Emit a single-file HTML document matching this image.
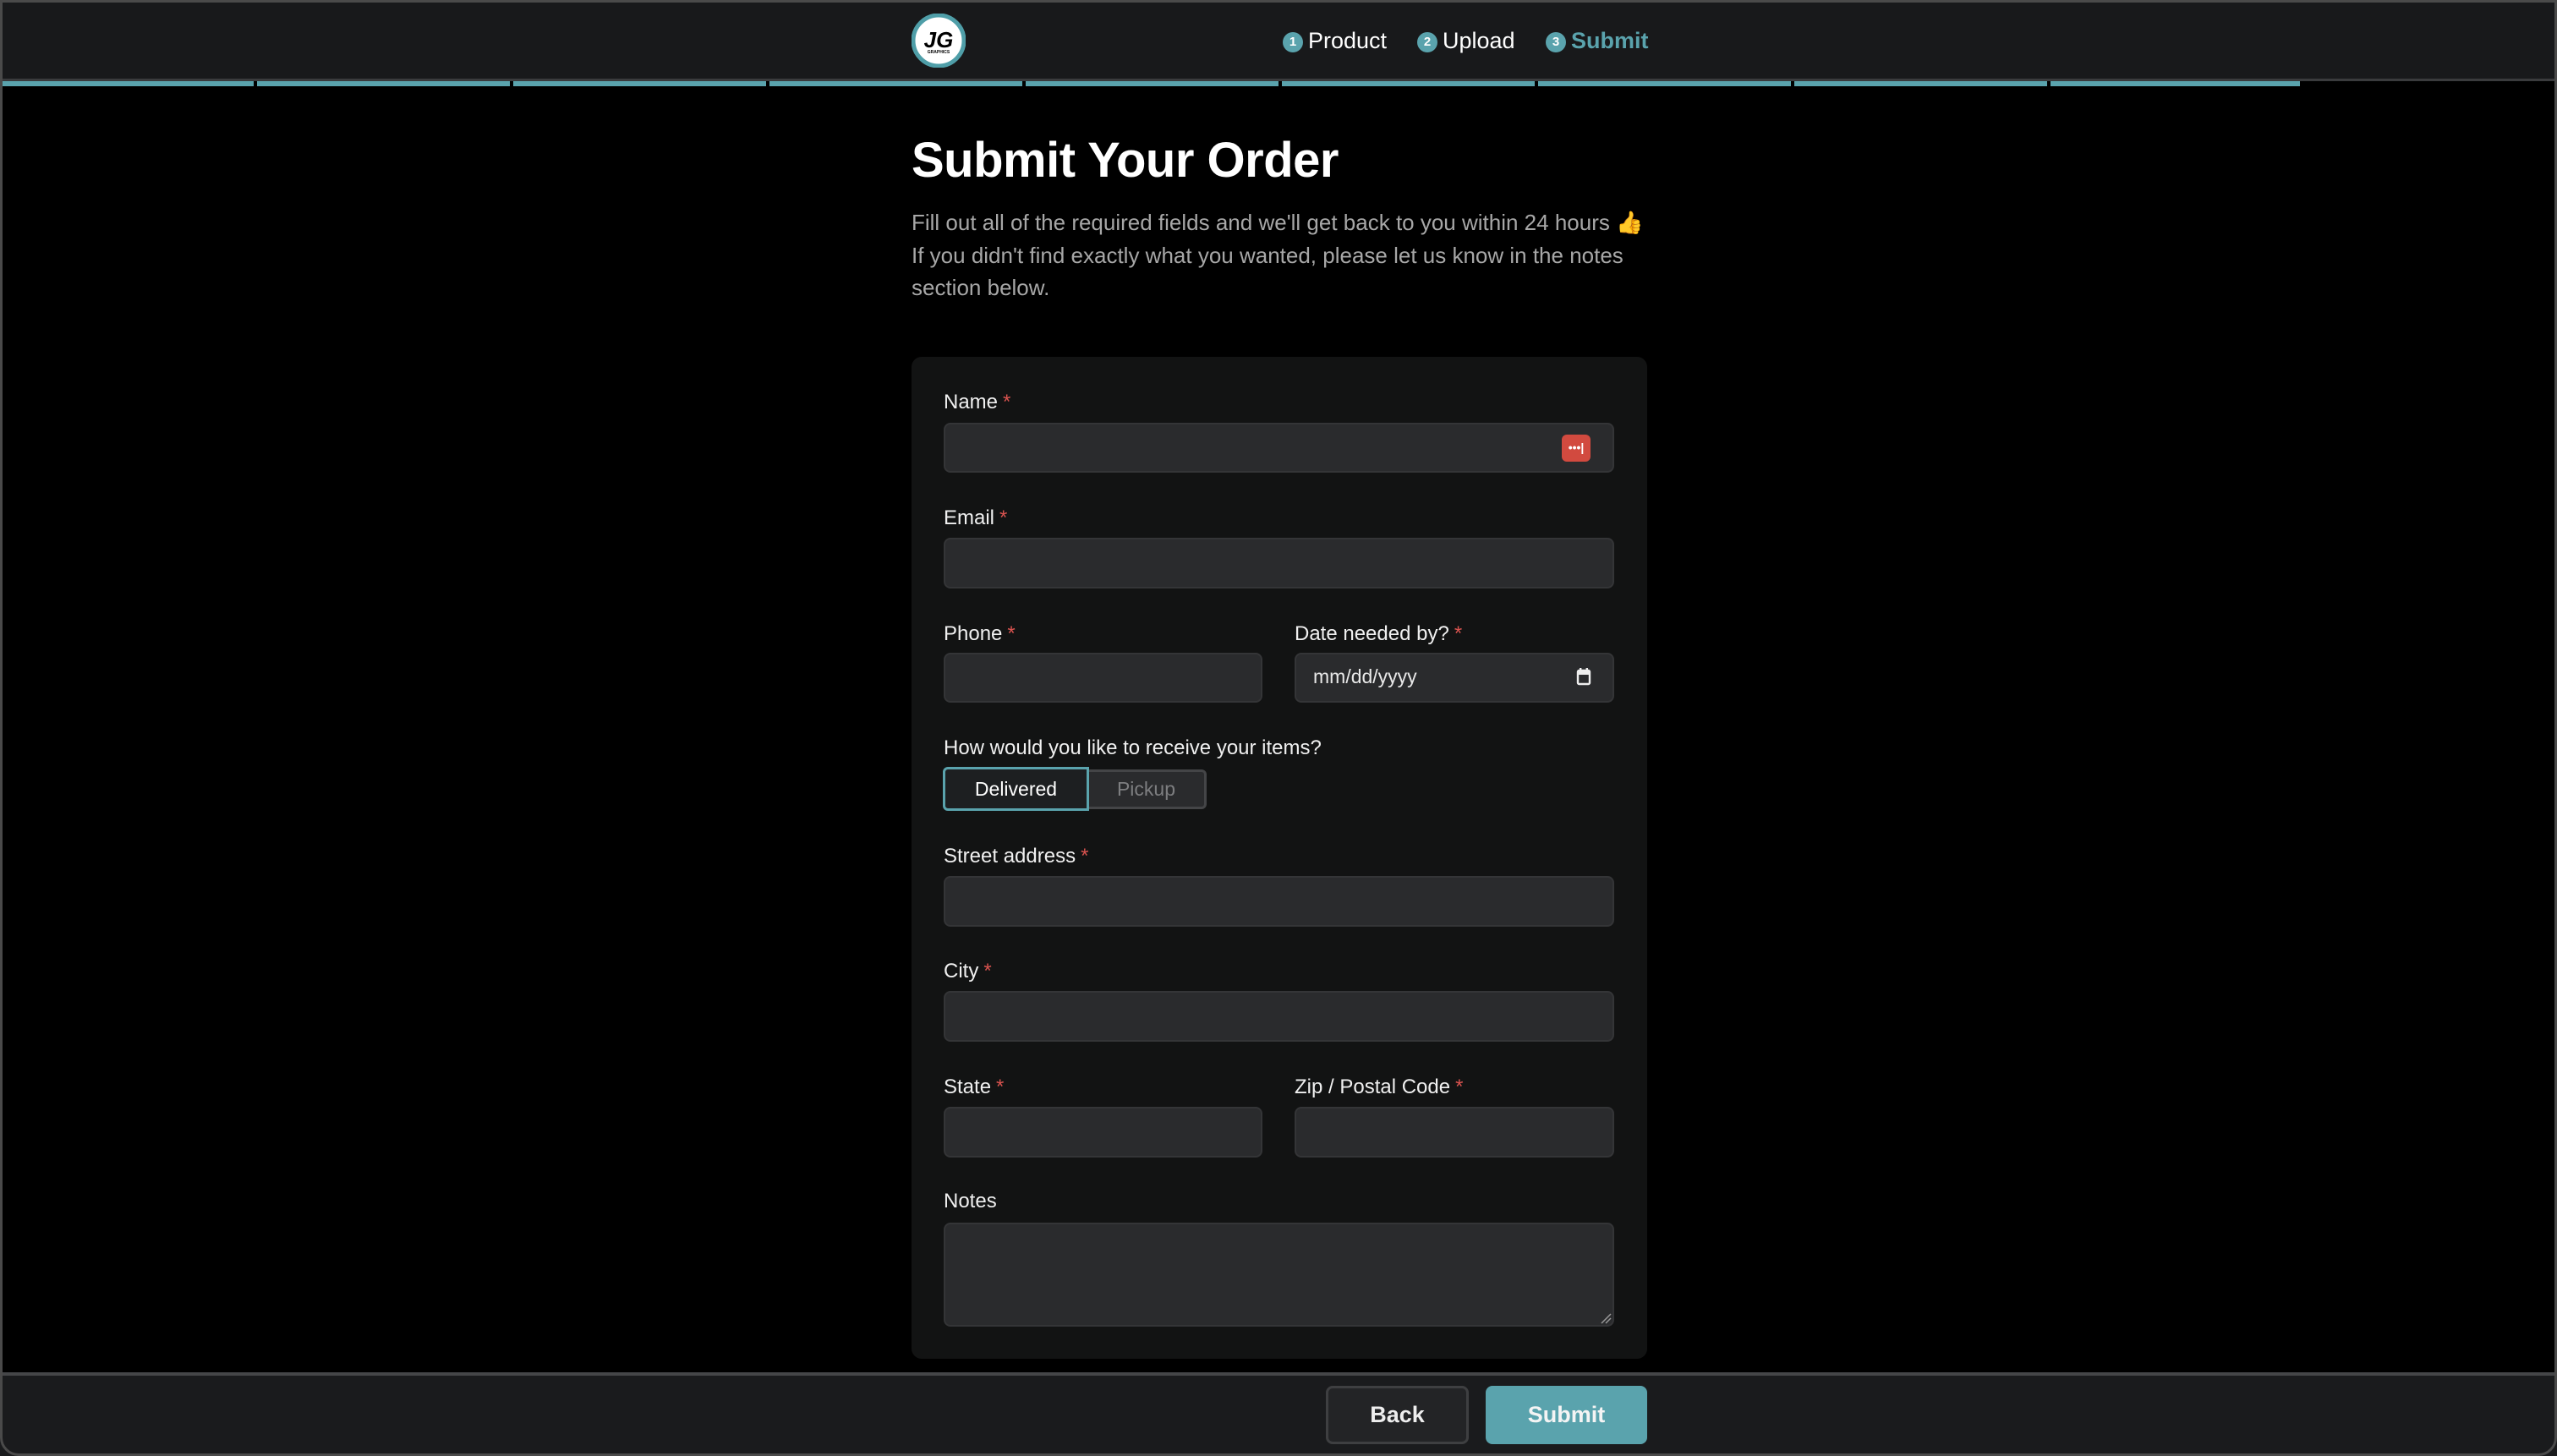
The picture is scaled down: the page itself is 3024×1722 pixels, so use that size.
<!DOCTYPE html>
<html><head><meta charset="utf-8">
<style>
*{box-sizing:border-box;margin:0;padding:0}
html,body{width:3024px;height:1722px;background:#000;overflow:hidden;font-family:"Liberation Sans",Arial,sans-serif;color:#f2f2f2}
.abs{position:absolute}
#frame{position:absolute;left:0;top:0;width:3024px;height:1722px;border:3px solid #4a4a4a;border-radius:0 0 22px 22px;pointer-events:none;z-index:10}
#header{left:0;top:0;width:3024px;height:96px;background:#18191b;border-bottom:3px solid #3a3b3d}
.seg{position:absolute;top:96px;height:6px;background:#5aa3ad}
.step{position:absolute;top:30px;font-size:27px;line-height:36px;color:#fff;white-space:nowrap}
.step b{display:inline-block;width:24px;height:24px;border-radius:50%;background:#5aa3ad;color:#fff;font-size:15px;line-height:24px;text-align:center;vertical-align:3px;margin-right:6px;font-weight:bold}
h1{position:absolute;left:1078px;top:156px;font-size:58px;font-weight:bold;color:#fff;letter-spacing:-0.5px;white-space:nowrap}
.p{position:absolute;left:1078px;top:244px;font-size:26px;line-height:38.6px;color:#a7a7a7;white-space:nowrap}
#card{left:1078px;top:422px;width:870px;height:1185px;background:#121313;border-radius:12px}
.lbl{position:absolute;font-size:24px;font-weight:normal;color:#f0f0f0;white-space:nowrap;line-height:28px}
.lbl i{font-style:normal;color:#d9534f;margin-left:6px}
.inp{position:absolute;background:#2a2b2d;border:2px solid #343537;border-radius:8px}
#footer{left:0;top:1623px;width:3024px;height:99px;background:#1a1b1d;border-top:4px solid #454648}
.btn{position:absolute;border-radius:8px;font-size:27px;font-weight:bold;text-align:center;color:#eee}
</style></head><body>
<div id="frame"></div>
<div id="header" class="abs"></div>
<div class="seg" style="left:0;width:300px"></div>
<div class="seg" style="left:304px;width:299px"></div>
<div class="seg" style="left:607px;width:299px"></div>
<div class="seg" style="left:910px;width:299px"></div>
<div class="seg" style="left:1213px;width:299px"></div>
<div class="seg" style="left:1516px;width:299px"></div>
<div class="seg" style="left:1819px;width:299px"></div>
<div class="seg" style="left:2122px;width:299px"></div>
<div class="seg" style="left:2425px;width:295px"></div>

<svg class="abs" style="left:1078px;top:16px" width="64" height="64" viewBox="0 0 64 64">
<circle cx="32" cy="32" r="30" fill="#fff" stroke="#4f9ea8" stroke-width="5"/>
<text x="32" y="40" text-anchor="middle" font-family="Liberation Sans" font-weight="bold" font-style="italic" font-size="26" fill="#000">JG</text>
<text x="32" y="47" text-anchor="middle" font-family="Liberation Sans" font-weight="bold" font-size="5" fill="#000">GRAPHICS</text>
</svg>

<div class="step" style="left:1517px"><b>1</b>Product</div>
<div class="step" style="left:1676px"><b>2</b>Upload</div>
<div class="step" style="left:1828px;color:#5aa3ad;font-weight:bold"><b>3</b>Submit</div>

<h1>Submit Your Order</h1>
<div class="p">Fill out all of the required fields and we'll get back to you within 24 hours 👍<br>If you didn't find exactly what you wanted, please let us know in the notes<br>section below.</div>

<div id="card" class="abs"></div>

<div class="lbl" style="left:1116px;top:462px">Name<i>*</i></div>
<div class="inp" style="left:1116px;top:500px;width:793px;height:59px"></div>
<div class="abs" style="left:1847px;top:514px;width:34px;height:32px;background:#d24a3f;border-radius:6px;color:#fff;font-size:14px;line-height:30px;text-align:center;font-weight:bold">•••|</div>

<div class="lbl" style="left:1116px;top:599px">Email<i>*</i></div>
<div class="inp" style="left:1116px;top:636px;width:793px;height:60px"></div>

<div class="lbl" style="left:1116px;top:736px">Phone<i>*</i></div>
<div class="inp" style="left:1116px;top:772px;width:377px;height:59px"></div>
<div class="lbl" style="left:1531px;top:736px">Date needed by?<i>*</i></div>
<div class="inp" style="left:1531px;top:772px;width:378px;height:59px"></div>
<div class="abs" style="left:1553px;top:787px;font-size:23px;color:#e8e8e8">mm/dd/yyyy</div>
<svg class="abs" style="left:1864px;top:789px" width="18" height="22" viewBox="0 0 18 22"><rect x="2" y="4" width="14" height="16" rx="1.5" fill="none" stroke="#eee" stroke-width="2.4"/><rect x="2" y="4" width="14" height="5" fill="#eee"/><rect x="4" y="1" width="2.4" height="4" fill="#eee"/><rect x="11.6" y="1" width="2.4" height="4" fill="#eee"/></svg>

<div class="lbl" style="left:1116px;top:871px">How would you like to receive your items?</div>
<div class="abs" style="left:1287px;top:910px;width:140px;height:47px;background:#2a2b2d;border:3px solid #444547;border-left:none;border-radius:0 6px 6px 0;color:#7d7e80;font-size:23px;line-height:41px;text-align:center">Pickup</div>
<div class="abs" style="left:1115px;top:907px;width:173px;height:52px;background:#1d1f21;border:3px solid #5aa3ad;border-radius:6px 0 0 6px;color:#fff;font-size:23px;line-height:46px;text-align:center">Delivered</div>

<div class="lbl" style="left:1116px;top:999px">Street address<i>*</i></div>
<div class="inp" style="left:1116px;top:1036px;width:793px;height:60px"></div>

<div class="lbl" style="left:1116px;top:1135px">City<i>*</i></div>
<div class="inp" style="left:1116px;top:1172px;width:793px;height:60px"></div>

<div class="lbl" style="left:1116px;top:1272px">State<i>*</i></div>
<div class="inp" style="left:1116px;top:1309px;width:377px;height:60px"></div>
<div class="lbl" style="left:1531px;top:1272px">Zip / Postal Code<i>*</i></div>
<div class="inp" style="left:1531px;top:1309px;width:378px;height:60px"></div>

<div class="lbl" style="left:1116px;top:1407px">Notes</div>
<div class="inp" style="left:1116px;top:1446px;width:793px;height:123px"></div>
<svg class="abs" style="left:1892px;top:1552px" width="14" height="14" viewBox="0 0 14 14"><path d="M2 13 L13 2 M7 13 L13 7" stroke="#999" stroke-width="1.5"/></svg>

<div id="footer" class="abs"></div>
<div class="btn" style="left:1568px;top:1639px;width:169px;height:69px;background:#232426;border:3px solid #3e3f41;line-height:63px">Back</div>
<div class="btn" style="left:1757px;top:1639px;width:191px;height:69px;background:#5aa3ad;line-height:69px;color:#f4f4f4">Submit</div>
</body></html>
